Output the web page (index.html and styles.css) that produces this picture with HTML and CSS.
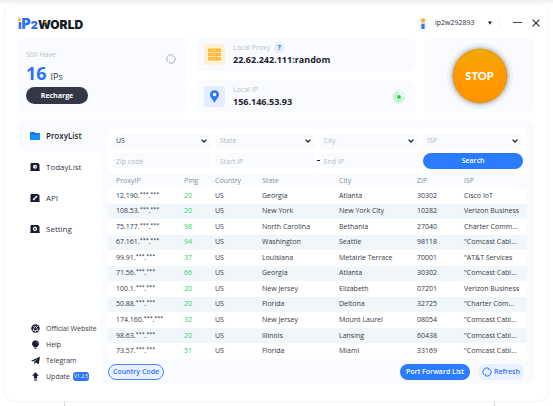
FILE: index.html
```html
<!DOCTYPE html>
<html lang="en">
<head>
<meta charset="utf-8">
<title>IP2World</title>
<link rel="stylesheet" href="styles.css">
</head>
<body>
<div class="window">
  <header class="topbar">
    <div class="logo"><span class="logo-ip">ı<span class="logo-p">P</span></span><span class="logo-two">2</span><span class="logo-world">WORLD</span><span class="logo-dot"></span><span class="logo-spark"></span></div>
    <div class="account">
      <svg class="avatar" viewBox="0 0 12 12"><circle cx="6" cy="6" r="6" fill="#f3f7fd"/><circle cx="6" cy="3.600" r="2.100" fill="#ffa90a"/><path d="M4.400 6.200q1.600 1.200 3.200 0V12H4.400z" fill="#2f72f4"/></svg>
      <button class="user" type="button"><span>ip2w292893</span><svg class="caret" viewBox="0 0 4 4"><path d="M0 .4h4L2 3.800z" fill="#1b1f2d"/></svg></button>
      <div class="controls">
        <button type="button" aria-label="Minimize"><svg class="min" viewBox="0 0 10 8"><path d="M0 3.500h9" stroke="#444" stroke-width="1"/></svg></button>
        <button type="button" aria-label="Close"><svg class="close" viewBox="0 0 8 8"><path d="M.6.6l6.800 6.800M7.400.6L.6 7.400" stroke="#333" stroke-width="1.200"/></svg></button>
      </div>
    </div>
  </header>

  <section class="summary">
    <div class="card balance">
      <div>
        <div class="label">Still Have</div>
        <div class="amount"><strong>16</strong> IPs</div>
        <button class="recharge" type="button">Recharge</button>
      </div>
      <button class="reload" type="button" aria-label="Reload"><svg viewBox="0 0 10 10" fill="none" stroke="#bcc5d3" stroke-width="1.200"><path d="M1.800 7.600A4.100 4.100 0 0 1 6.800 1.300M8.200 2.400A4.100 4.100 0 0 1 3.200 8.700M3.200 8.700l.3-1.700M6.800 1.300l-.3 1.700"/></svg></button>
    </div>
    <div class="endpoints">
      <div class="card endpoint">
        <svg class="tile" viewBox="0 0 21 21"><rect width="21" height="21" rx="3" fill="#fff0d6"/><g fill="#fdb52b"><rect x="4" y="4.500" width="13" height="3.600" rx="1"/><rect x="4" y="8.700" width="13" height="3.600" rx="1"/><rect x="4" y="12.900" width="13" height="3.600" rx="1"/></g><path d="M6 6.300h6M6 10.500h6M6 14.700h6" stroke="#ffdc91" stroke-width=".8"/><path d="M14 6.300h1M14 10.500h1M14 14.700h1" stroke="#ffe9bd"/></svg>
        <div><div class="label">Local Proxy <button class="hint" type="button">?</button></div><div class="value">22.62.242.111:random</div></div>
      </div>
      <div class="card endpoint">
        <svg class="tile" viewBox="0 0 21 21"><rect width="21" height="21" rx="3" fill="#e4edff"/><path d="M10.500 4.200c-2.600 0-4.500 2-4.500 4.400 0 2.900 2.700 4.500 4.500 8.400 1.800-3.900 4.500-5.500 4.500-8.400 0-2.400-1.900-4.400-4.500-4.400z" fill="#2e74fb"/><circle cx="10.500" cy="8.600" r="1.800" fill="#fff"/></svg>
        <div><div class="label">Local IP</div><div class="value">156.146.53.93</div></div>
        <svg class="signal" viewBox="0 0 14 14" fill="none"><circle cx="7" cy="7" r="6.500" fill="#effbf3"/><path d="M7 1A6 6 0 1 0 13 7" stroke="#b3e9c6" stroke-width=".8"/><path d="M9 1.300A6 6 0 0 1 12.700 5" stroke="#c5efd3" stroke-width=".6"/><path d="M7 3.200A3.800 3.800 0 1 0 10.800 7" stroke="#7bdca0" stroke-width=".8"/><circle cx="7" cy="7" r="1.900" fill="#1bc85b"/></svg>
      </div>
    </div>
    <div class="card power"><button class="stop" type="button">STOP</button></div>
  </section>

  <div class="main">
    <aside class="side">
      <nav class="nav">
        <a class="active" href="#"><svg viewBox="0 0 10 10"><path d="M0 2q0-1 1-1h3l1.300 1H9q1 0 1 1v5q0 1-1 1H1Q0 9 0 8z" fill="#0b72e8"/><path d="M0 3.400h10V8q0 1-1 1H1Q0 9 0 8z" fill="#1890ff"/></svg>ProxyList</a>
        <a href="#"><svg viewBox="0 0 10 10"><path d="M.5 2q0-1 1-1H8l1.500 1.500V8l.5 1H0l.5-1z" fill="#171c30"/><circle cx="5" cy="4.800" r="2" fill="#fff"/><path d="M5 3.800v1.200h1" stroke="#171c30" stroke-width=".6" fill="none"/></svg>TodayList</a>
        <a href="#"><svg viewBox="0 0 10 10"><path d="M.5 2q0-1 1-1H8l1.500 1.500V8l.5 1H0l.5-1z" fill="#171c30"/><path d="M3.600 6.300l3-2.800" stroke="#fff" stroke-width="1.600" stroke-linecap="round"/><path d="M4.400 4.200l1.500 1.500" stroke="#171c30" stroke-width=".5"/></svg>API</a>
        <a href="#"><svg viewBox="0 0 10 10"><path d="M.5 2q0-1 1-1H8l1.500 1.500V8l.5 1H0l.5-1z" fill="#171c30"/><path d="M5 2.600l2 1.100v2.400L5 7.200 3 6.100V3.700z" fill="#fff"/><circle cx="5" cy="4.900" r=".9" fill="#171c30"/></svg>Setting</a>
      </nav>
      <nav class="links">
        <a href="#"><svg viewBox="0 0 9 9"><circle cx="4.500" cy="4.500" r="4.200" fill="#171c30"/><path d="M4.500 1.800L1.800 6.500h5.400zM2 2l1 1M7 2L6 3M4.500 8V6.500" fill="none" stroke="#fff" stroke-width=".7"/></svg>Official Website</a>
        <a href="#"><svg viewBox="0 0 9 9"><path d="M4.500.3a3.500 3.500 0 0 1 1.800 6.500v.5H2.700v-.5A3.500 3.500 0 0 1 4.500.3zM3.200 7.700h2.600l-.6 1.100H3.800z" fill="#171c30"/><path d="M5.400 1.800q1 .4 1.100 1.400" stroke="#fff" stroke-width=".5" fill="none"/></svg>Help</a>
        <a href="#"><svg viewBox="0 0 9 9"><path d="M0 4.800L9 .7 7.700 8.200 4.800 6.400 3.300 8.300V5.800L7.200 2.500 2.400 5.500z" fill="#171c30"/></svg>Telegram</a>
        <a href="#"><svg viewBox="0 0 9 9"><path d="M4.500.3L8 3.800H6v2.400H3V3.800H1zM3 6.800h3v.7H3zM3.300 8h2.400v.8H3.300z" fill="#171c30"/></svg>Update <span class="version">V1.2.5</span></a>
      </nav>
    </aside>

    <main class="panel">
      <form class="filters">
        <div class="pick"><select class="chosen" aria-label="Country"><option>US</option></select><svg viewBox="0 0 6 4"><path d="M.6.6L3 3 5.400.6" /></svg></div>
        <div class="pick"><select aria-label="State"><option>State</option></select><svg viewBox="0 0 6 4"><path d="M.6.6L3 3 5.400.6" /></svg></div>
        <div class="pick"><select aria-label="City"><option>City</option></select><svg viewBox="0 0 6 4"><path d="M.6.6L3 3 5.400.6" /></svg></div>
        <div class="pick"><select aria-label="ISP"><option>ISP</option></select><svg viewBox="0 0 6 4"><path d="M.6.6L3 3 5.400.6" /></svg></div>
        <input type="text" placeholder="Zip code" aria-label="Zip code">
        <div class="range"><input type="text" placeholder="Start IP" aria-label="Start IP"><span class="dash"></span></div>
        <input type="text" placeholder="End IP" aria-label="End IP">
        <button class="search" type="button">Search</button>
      </form>
      <table>
        <colgroup><col class="c-ip"><col class="c-ping"><col class="c-country"><col class="c-state"><col class="c-city"><col class="c-zip"><col class="c-isp"></colgroup>
        <thead><tr><th>ProxyIP</th><th>Ping</th><th>Country</th><th>State</th><th>City</th><th>ZIP</th><th>ISP</th></tr></thead>
        <tbody>
          <tr><td>12.190.<span class="mask">***.***</span></td><td>20</td><td>US</td><td>Georgia</td><td>Atlanta</td><td>30302</td><td>Cisco IoT</td></tr>
          <tr><td>108.53.<span class="mask">***.***</span></td><td>20</td><td>US</td><td>New York</td><td>New York City</td><td>10282</td><td>Verizon Business</td></tr>
          <tr><td>75.177.<span class="mask">***.***</span></td><td>98</td><td>US</td><td>North Carolina</td><td>Bethania</td><td>27040</td><td>Charter Comm...</td></tr>
          <tr><td>67.161.<span class="mask">***.***</span></td><td>94</td><td>US</td><td>Washington</td><td>Seattle</td><td>98118</td><td>"Comcast Cabl...</td></tr>
          <tr><td>99.91.<span class="mask">***.***</span></td><td>37</td><td>US</td><td>Louisiana</td><td>Metairie Terrace</td><td>70001</td><td>"AT&amp;T Services</td></tr>
          <tr><td>71.56.<span class="mask">***.***</span></td><td>66</td><td>US</td><td>Georgia</td><td>Atlanta</td><td>30302</td><td>"Comcast Cabl...</td></tr>
          <tr><td>100.1.<span class="mask">***.***</span></td><td>20</td><td>US</td><td>New Jersey</td><td>Elizabeth</td><td>07201</td><td>Verizon Business</td></tr>
          <tr><td>50.88.<span class="mask">***.***</span></td><td>20</td><td>US</td><td>Florida</td><td>Deltona</td><td>32725</td><td>"Charter Com...</td></tr>
          <tr><td>174.160.<span class="mask">***.***</span></td><td>32</td><td>US</td><td>New Jersey</td><td>Mount Laurel</td><td>08054</td><td>"Comcast Cabl...</td></tr>
          <tr><td>98.63.<span class="mask">***.***</span></td><td>20</td><td>US</td><td>Illinois</td><td>Lansing</td><td>60438</td><td>"Comcast Cabl...</td></tr>
          <tr><td>73.57.<span class="mask">***.***</span></td><td>51</td><td>US</td><td>Florida</td><td>Miami</td><td>33169</td><td>"Comcast Cabl...</td></tr>
        </tbody>
      </table>
      <div class="actions">
        <button class="country" type="button">Country Code</button>
        <button class="forward" type="button">Port Forward List</button>
        <button class="refresh" type="button"><svg viewBox="0 0 10 10" fill="none" stroke="#2e74fb" stroke-width="1"><path d="M1.800 7.600A4.100 4.100 0 0 1 6.800 1.300M8.200 2.400A4.100 4.100 0 0 1 3.200 8.700M3.200 8.700l.3-1.700M6.800 1.300l-.3 1.700"/></svg>Refresh</button>
      </div>
    </main>
  </div>
</div>
<div class="ticks"><span></span><span></span></div>
</body>
</html>
```
FILE: styles.css
```css
* { box-sizing: border-box; }
body {
  margin: 0;
  padding: 5px 5px 0;
  background: linear-gradient(#f1f1f1 0, #f1f1f1 2px, #fff 4px);
  font: 7px/10px "Open Sans", "Noto Sans", sans-serif;
  color: #343946;
}
button, input, select { font: inherit; border: 0; margin: 0; padding: 0; color: inherit; }
button { background: none; }
a { color: inherit; text-decoration: none; }
svg { display: block; flex: none; }

.window {
  background: #fff;
  border-radius: 9px;
  box-shadow: 0 0 2px #dcdfe4;
  padding: 8px 13px 17px;
}
.topbar { display: flex; justify-content: space-between; height: 25px; }
.logo {
  position: relative;
  display: flex;
  align-items: baseline;
  height: 20px;
  font: 900 12px/22px Inter, sans-serif;
  color: #171b2c;
}
.logo-ip, .logo-two { color: #2c70f5; }
.logo-p { font-size: 14px; }
.logo-two { font-size: 11px; }
.logo-dot { position: absolute; left: 0; top: 5px; width: 3px; height: 3px; border-radius: 50%; background: #ffab0f; }
.logo-spark { position: absolute; left: 26px; top: 8px; width: 3px; height: 2px; border-radius: 50%; background: #ffab0f; }
.account { display: flex; align-items: center; height: 20px; }
.avatar { width: 12px; height: 12px; margin-right: 6px; }
.user { display: flex; align-items: center; justify-content: space-between; width: 57px; color: #2b3040; }
.caret { width: 4px; height: 4px; }
.controls { display: flex; align-items: center; gap: 9px; margin-left: 7px; padding-left: 13px; border-left: 1px solid #f0f2f5; height: 12px; margin-right: -5px; }
.min { width: 10px; height: 8px; }
.close { width: 8px; height: 8px; }

.card { background: #f9fbfe; border-radius: 8px; }
.summary { display: grid; grid-template-columns: 170fr 220fr 111fr; gap: 8px; height: 75px; }
.label { color: #b9c2cf; display: flex; align-items: center; }
.balance { display: flex; justify-content: space-between; padding: 12px 12px 0 8px; }
.amount { display: flex; align-items: baseline; gap: 4px; font-size: 9px; line-height: 27px; height: 27px; }
.amount strong { font-size: 18px; font-weight: 700; color: #2e74fb; }
.recharge { width: 62px; height: 17px; border-radius: 9px; background: #343748; color: #fff; font-weight: 700; }
.reload { align-self: flex-start; margin-top: 4px; }
.reload svg, .refresh svg { width: 10px; height: 10px; }
.endpoints { display: grid; gap: 9px; }
.endpoint { display: flex; align-items: center; gap: 8px; padding: 0 10px 0 8px; }
.tile { width: 21px; height: 21px; }
.value { font-size: 9px; line-height: 13px; font-weight: 700; color: #20242f; }
.hint { width: 10px; height: 10px; margin-left: 4px; border-radius: 50%; background: #e4edff; color: #2e74fb; font-weight: 700; line-height: 10px; }
.signal { width: 14px; height: 14px; margin-left: auto; }
.power { display: grid; place-items: center; }
.stop {
  width: 56px;
  height: 56px;
  border-radius: 50%;
  border: 1px solid #c5b08c;
  background: linear-gradient(#f0a800, #ff9a00 45%, #ff9400);
  box-shadow: inset 0 0 2px #e38e00, 0 0 0 2px #d6d9e0, 0 0 0 5px #f0f2f6;
  color: #fff;
  font: 900 11px/16px Lato, sans-serif;
}

.main { display: grid; grid-template-columns: 82fr 435fr; margin-top: 7px; }
.side { display: flex; flex-direction: column; justify-content: space-between; }
.nav a { display: flex; align-items: center; gap: 6px; height: 31px; padding-left: 12px; font-size: 8px; }
.nav svg { width: 10px; height: 10px; }
.nav .active { background: #f9fbfe; border-radius: 8px 0 0 8px; font-weight: 600; color: #20242f; }
.links a { display: flex; align-items: center; gap: 6px; padding-left: 13px; height: 15px; }
.links { display: grid; gap: 1px; }
.links svg { width: 9px; height: 9px; }
.version { background: #2e74fb; color: #fff; border-radius: 3px; padding: 0 1px; font-size: 5px; line-height: 9px; margin-left: -3px; }

.panel { background: #f9fbfe; border-radius: 0 8px 8px 8px; padding: 9px 8px 4px; }
.filters { display: grid; grid-template-columns: repeat(4, 1fr); gap: 4px; padding: 4px; background: #fff; border-radius: 6px 6px 0 0; }
.pick, .range { position: relative; display: grid; }
.pick select, .filters input {
  appearance: none;
  width: 100%;
  min-width: 0;
  height: 16px;
  padding: 0 4px;
  border-radius: 5px;
  background: #f9fbfe;
  color: #b3bcc8;
}
.pick .chosen { color: #343946; }
.filters input::placeholder { color: #b3bcc8; opacity: 1; }
.pick svg { position: absolute; right: 5px; top: 6px; width: 6px; height: 4px; fill: none; stroke: #20242f; stroke-width: 1.300; pointer-events: none; }
.dash { position: absolute; right: -4px; top: 7px; width: 3px; height: 1px; background: #20242f; }
.search { height: 16px; border-radius: 8px; background: #2b7bff; color: #fff; font-weight: 600; }

table { width: 100%; height: 186px; border-collapse: collapse; table-layout: fixed; }
.c-ip { width: 68px; }
.c-ping { width: 31px; }
.c-country { width: 47px; }
.c-state { width: 77px; }
.c-city { width: 78px; }
.c-zip { width: 47px; }
.c-isp { width: 71px; }
th, td { padding: 0 0 0 8px; text-align: left; font-weight: 400; white-space: nowrap; }
th { height: 15px; color: #8491a3; }
tbody tr { background: #fff; }
tbody tr:nth-child(even) { background: #f1f6fa; }
td:nth-child(2) { color: #2fd36c; }
.mask { font-family: Lato, sans-serif; line-height: 1; }

.actions { display: flex; align-items: center; margin-top: 5px; padding-right: 3px; }
.actions button { height: 16px; border-radius: 8px; font-weight: 600; white-space: nowrap; }
.actions .country { width: 56px; border: 1px solid #4c87fb; background: #e9f1ff; color: #2e74fb; }
.actions .forward { width: 70px; margin-left: auto; background: #2b7bff; color: #fff; }
.actions .refresh { display: flex; align-items: center; justify-content: center; gap: 2px; width: 46px; margin-left: 8px; background: #e9f0ff; color: #2e74fb; }

.ticks { display: flex; justify-content: space-between; padding: 0 53px 0 59px; }
.ticks span { width: 1px; height: 5px; background: #d5d7da; }
```
